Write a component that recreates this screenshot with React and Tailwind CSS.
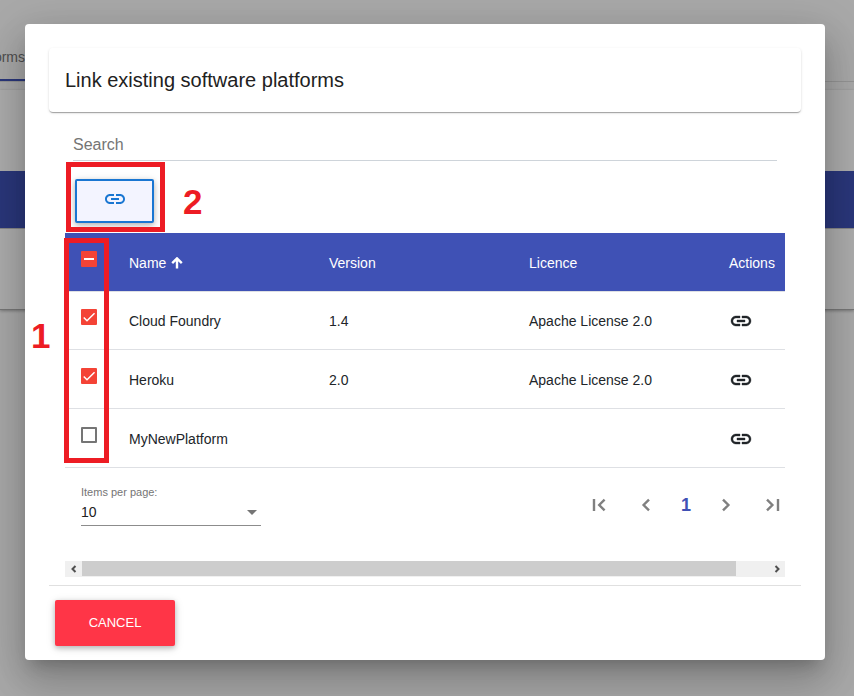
import { useEffect, useRef } from 'react';
import { MdLink, MdArrowDropDown } from 'react-icons/md';

const platforms = [
  { name: 'Cloud Foundry', version: '1.4', licence: 'Apache License 2.0', selected: true },
  { name: 'Heroku', version: '2.0', licence: 'Apache License 2.0', selected: true },
  { name: 'MyNewPlatform', version: '', licence: '', selected: false },
];

function Checkbox({ label, checked = false, indeterminate = false }) {
  const ref = useRef(null);
  useEffect(() => {
    ref.current.indeterminate = indeterminate;
  }, [indeterminate]);

  return (
    <label className="ml-4 grid size-4 place-items-center">
      <input
        ref={ref}
        type="checkbox"
        aria-label={label}
        defaultChecked={checked}
        className="peer col-start-1 row-start-1 size-4 appearance-none rounded-[1px] border-2 border-[#757575] checked:border-[#f44336] checked:bg-[#f44336] indeterminate:border-[#f44336] indeterminate:bg-[#f44336]"
      />
      {indeterminate ? (
        <span className="pointer-events-none col-start-1 row-start-1 h-0.5 w-2.5 bg-white" />
      ) : (
        <svg
          viewBox="0 0 24 24"
          className="pointer-events-none col-start-1 row-start-1 hidden size-4 fill-none stroke-white peer-checked:block"
          strokeWidth="2.2"
          aria-hidden="true"
        >
          <path d="M4.1 12.7 9 17.6 20.3 6.3" />
        </svg>
      )}
    </label>
  );
}

function BackgroundPage() {
  return (
    <div className="absolute inset-0 bg-[#fafafa]" aria-hidden="true">
      <div className="flex h-[82px] items-end border-b border-[#dcdcdc]">
        <div className="flex h-[34px] w-[25px] justify-end border-b-2 border-[#3f51b5] text-sm text-[#757575]">
          <span>orms</span>
        </div>
      </div>
      <div className="mt-2 border-b border-[#b0b0b0] bg-white shadow-[0_1px_3px_rgba(0,0,0,0.3)]">
        <div className="h-[81px]" />
        <div className="h-[57px] bg-[#3f51b5]" />
        <div className="h-[81px] border-t border-[#c8c8c8]" />
      </div>
    </div>
  );
}

function PlatformTable() {
  return (
    <table className="w-full table-fixed border-separate border-spacing-0 text-left text-sm text-[#212529]">
      <colgroup>
        <col className="w-16" />
        <col />
        <col />
        <col />
        <col className="w-14" />
      </colgroup>
      <thead>
        <tr className="h-[58px] bg-[#3f51b5] text-white *:pt-0.5">
          <th className="pb-2 font-normal">
            <Checkbox label="Select all" indeterminate />
          </th>
          <th className="font-normal">
            <button type="button" className="flex items-center gap-[5px]">
              Name
              <svg viewBox="0 0 12 12" className="size-3 fill-none stroke-white" strokeWidth="2.4" aria-hidden="true">
                <path d="M6 11.5V2M1.2 6.2 6 1.4 10.8 6.2" />
              </svg>
            </button>
          </th>
          <th className="font-normal">Version</th>
          <th className="font-normal">Licence</th>
          <th className="font-normal">Actions</th>
        </tr>
      </thead>
      <tbody>
        {platforms.map((p) => (
          <tr
            key={p.name}
            className="h-[59px] *:border-b *:border-[#dee0e4] *:pt-0.5 first:*:border-t first:*:pt-px"
          >
            <td className="pb-2">
              <Checkbox label={`Select ${p.name}`} checked={p.selected} />
            </td>
            <td>{p.name}</td>
            <td>{p.version}</td>
            <td>{p.licence}</td>
            <td>
              <button type="button" aria-label={`Link ${p.name}`} className="flex">
                <MdLink className="size-6 [&_path:last-child]:stroke-current [&_path:last-child]:[stroke-width:0.4]" />
              </button>
            </td>
          </tr>
        ))}
      </tbody>
    </table>
  );
}

function PageIcon({ d }) {
  return (
    <svg viewBox="0 0 24 24" className="size-6 fill-none stroke-[#808080]" strokeWidth="2.4" aria-hidden="true">
      <path d={d} />
    </svg>
  );
}

function Paginator() {
  return (
    <div className="flex items-start justify-between pt-4 pl-4 text-[#757575]">
      <div className="w-[180px]">
        <label htmlFor="page-size" className="block text-[11px] leading-4">
          Items per page:
        </label>
        <div className="grid h-[26px] items-start border-b border-[#8c8c8c]">
          <select
            id="page-size"
            defaultValue="10"
            className="col-start-1 row-start-1 h-6 appearance-none bg-transparent text-sm text-[#212121]"
          >
            <option>10</option>
            <option>25</option>
            <option>50</option>
          </select>
          <MdArrowDropDown className="pointer-events-none col-start-1 row-start-1 -mr-[3px] size-6 justify-self-end" />
        </div>
      </div>
      <nav aria-label="Pagination" className="flex h-[42px] items-center gap-4 pr-px">
        <button type="button" aria-label="First page">
          <PageIcon d="M6 6v12M16.6 6.6 11.2 12l5.4 5.4" />
        </button>
        <button type="button" aria-label="Previous page" className="px-1.5">
          <PageIcon d="M15 6.6 9.6 12l5.4 5.4" />
        </button>
        <button type="button" aria-current="page" className="w-3 text-lg font-bold text-[#3f51b5]">
          1
        </button>
        <button type="button" aria-label="Next page" className="px-1.5">
          <PageIcon d="M9 6.6 14.4 12 9 17.4" />
        </button>
        <button type="button" aria-label="Last page">
          <PageIcon d="M7 6.6 12.4 12 7 17.4M18 6v12" />
        </button>
      </nav>
    </div>
  );
}

function ScrollArrow({ label, points }) {
  return (
    <button type="button" aria-label={label} className="flex w-[17px] items-center justify-center">
      <svg viewBox="0 0 8 8" className="size-2 fill-none stroke-[#505050]" strokeWidth="2">
        <polyline points={points} />
      </svg>
    </button>
  );
}

export default function App() {
  return (
    <div className="relative min-h-screen overflow-hidden font-['Liberation_Sans',Arial,sans-serif]">
      <BackgroundPage />
      <div className="relative min-h-screen bg-black/32 pt-6 pr-[29px] pb-9 pl-[25px]">
        <section
          role="dialog"
          aria-labelledby="dialog-title"
          className="relative rounded bg-white px-6 pt-6 pb-3.5 shadow-[0_11px_15px_-7px_rgba(0,0,0,0.2),0_24px_38px_3px_rgba(0,0,0,0.14),0_9px_46px_8px_rgba(0,0,0,0.12)]"
        >
          <header className="rounded p-4 shadow-[0_2px_1px_-1px_rgba(0,0,0,0.2),0_1px_1px_0_rgba(0,0,0,0.14),0_1px_3px_0_rgba(0,0,0,0.12)]">
            <h1 id="dialog-title" className="text-xl leading-8 text-[#212121]">
              Link existing software platforms
            </h1>
          </header>

          <div className="px-4">
            <div className="px-2 pt-4">
              <input
                type="text"
                aria-label="Search"
                placeholder="Search"
                className="block h-[33px] w-full border-b border-[#ced4da] pt-0.5 text-base text-[#212121] outline-none placeholder:text-[#757575]"
              />
            </div>
            <div className="px-2.5 pt-[18px] pb-2.5">
              <button
                type="button"
                aria-label="Link selected platforms"
                className="flex h-11 w-[79px] items-center justify-center rounded-xs border-2 border-[#1976d2] bg-[#f3f4ff] pb-1 text-[#1976d2] shadow-[0_2px_5px_rgba(0,0,0,0.2),0_2px_10px_rgba(0,0,0,0.15)]"
              >
                <MdLink className="size-6" />
              </button>
            </div>
            <PlatformTable />
            <Paginator />
            <div className="mt-[35px] mb-2 flex h-4 justify-between bg-[#f0f0f0]">
              <ScrollArrow label="Scroll left" points="5.5,1 2.5,4 5.5,7" />
              <div className="flex flex-1 pb-px">
                <div className="w-[95.3%] bg-[#cdcdcd]" />
              </div>
              <ScrollArrow label="Scroll right" points="2.5,1 5.5,4 2.5,7" />
            </div>
          </div>

          <footer className="border-t border-[#e0e0e0] px-1.5 pt-3.5">
            <button
              type="button"
              className="h-[46px] w-[120px] rounded-xs bg-[#ff3547] text-[13px] text-white shadow-[0_2px_5px_rgba(0,0,0,0.2),0_2px_10px_rgba(0,0,0,0.15)]"
            >
              CANCEL
            </button>
          </footer>

          <div className="pointer-events-none absolute top-[138px] left-[41px] h-[70px] w-[99px] border-5 border-[#ed1c24]" />
          <div className="pointer-events-none absolute top-[214px] left-[39px] h-[225px] w-[45px] border-5 border-[#ed1c24]" />
          <span className="absolute top-[158px] left-[158px] text-[35px] leading-10 font-bold text-[#ed1c24]">2</span>
          <span className="absolute top-[292px] left-1.5 text-[35px] leading-10 font-bold text-[#ed1c24]">1</span>
        </section>
      </div>
    </div>
  );
}
